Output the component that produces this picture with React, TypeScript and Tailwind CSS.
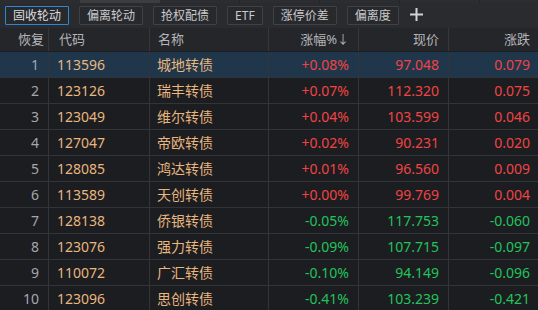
import React from "react";

type Row = { idx: number; code: string; name: string; pct: string; price: string; chg: string; up: boolean };

const rows: Row[] = [
  { idx: 1, code: "113596", name: "城地转债", pct: "+0.08%", price: "97.048", chg: "0.079", up: true },
  { idx: 2, code: "123126", name: "瑞丰转债", pct: "+0.07%", price: "112.320", chg: "0.075", up: true },
  { idx: 3, code: "123049", name: "维尔转债", pct: "+0.04%", price: "103.599", chg: "0.046", up: true },
  { idx: 4, code: "127047", name: "帝欧转债", pct: "+0.02%", price: "90.231", chg: "0.020", up: true },
  { idx: 5, code: "128085", name: "鸿达转债", pct: "+0.01%", price: "96.560", chg: "0.009", up: true },
  { idx: 6, code: "113589", name: "天创转债", pct: "+0.00%", price: "99.769", chg: "0.004", up: true },
  { idx: 7, code: "128138", name: "侨银转债", pct: "-0.05%", price: "117.753", chg: "-0.060", up: false },
  { idx: 8, code: "123076", name: "强力转债", pct: "-0.09%", price: "107.715", chg: "-0.097", up: false },
  { idx: 9, code: "110072", name: "广汇转债", pct: "-0.10%", price: "94.149", chg: "-0.096", up: false },
  { idx: 10, code: "123096", name: "思创转债", pct: "-0.41%", price: "103.239", chg: "-0.421", up: false },
];

const tabs = ["固收轮动", "偏离轮动", "抢权配债", "ETF", "涨停价差", "偏离度"];

const font = { fontFamily: '"Noto Sans", "Noto Sans CJK SC", sans-serif' };

export default function App() {
  return (
    <div className="w-[538px] h-[310px] overflow-hidden bg-[#1c1d21] flex flex-col" style={font}>
      {/* top strip */}
      <div className="h-[3px] flex bg-[#2c2d31] shrink-0">
        <div className="w-[80px]" />
        <div className="w-[80px] bg-[#3c3d41]" />
        <div className="w-[80px] border-r border-[#232428]" />
        <div className="w-[80px] border-r border-[#232428]" />
        <div className="w-[80px] border-r border-[#232428]" />
        <div className="w-[80px] border-r border-[#232428]" />
      </div>
      {/* toolbar */}
      <div className="h-[25px] bg-[#2a2b2f] flex items-center pl-[5px] gap-[10px] shrink-0">
        {tabs.map((t, i) => (
          <div
            key={t}
            className={
              "h-[19px] flex items-center px-[7px] text-[12px] leading-none text-[#c9cacc] bg-[#28292d] border rounded-[1px] " +
              (i === 0 ? "border-[#2f86d6] text-[#dcdcdc]" : "border-[#404146]")
            }
          >
            {t}
          </div>
        ))}
        <svg width="13" height="13" viewBox="0 0 13 13" className="ml-[1px] -mt-[2px]">
          <rect x="5.5" y="0" width="2" height="13" fill="#d4d4d4" />
          <rect x="0" y="5.5" width="13" height="2" fill="#d4d4d4" />
        </svg>
      </div>
      {/* header */}
      <div className="h-[24px] bg-[#25262a] grid grid-cols-[49px_101px_119px_90px_90px_89px] text-[13px] text-[#b4b5b8] shrink-0 border-b border-[#1c1d21]">
        <div className="border-r border-[#36373b] flex items-center justify-end pr-[4px]">恢复</div>
        <div className="border-r border-[#36373b] flex items-center pl-[10px]">代码</div>
        <div className="border-r border-[#36373b] flex items-center pl-[8px]">名称</div>
        <div className="border-r border-[#36373b] flex items-center justify-end pr-[9px]">涨幅%<span className="text-[12px]">↓</span></div>
        <div className="border-r border-[#36373b] flex items-center justify-end pr-[9px]">现价</div>
        <div className="flex items-center justify-end pr-[8px]">涨跌</div>
      </div>
      {/* rows */}
      <div className="flex flex-col">
        {rows.map((r) => {
          const color = r.up ? "text-[#ef4444]" : "text-[#22c35b]";
          return (
            <div
              key={r.idx}
              className={
                "h-[26px] grid grid-cols-[49px_101px_119px_90px_90px_89px] text-[14px] border-b border-[#333438] " +
                (r.idx === 1 ? "bg-[#20364a]" : "")
              }
            >
              <div className="border-r border-[#333438] flex items-center justify-end pr-[9px] text-[#a6a7aa]">{r.idx}</div>
              <div className="border-r border-[#333438] flex items-center pl-[8px] text-[#e8b67e]">{r.code}</div>
              <div className="border-r border-[#333438] flex items-center pl-[7px] text-[#e8b67e]">{r.name}</div>
              <div className={"border-r border-[#333438] flex items-center justify-end pr-[9px] " + color}>{r.pct}</div>
              <div className={"border-r border-[#333438] flex items-center justify-end pr-[9px] " + color}>{r.price}</div>
              <div className={"flex items-center justify-end pr-[8px] " + color}>{r.chg}</div>
            </div>
          );
        })}
      </div>
    </div>
  );
}
